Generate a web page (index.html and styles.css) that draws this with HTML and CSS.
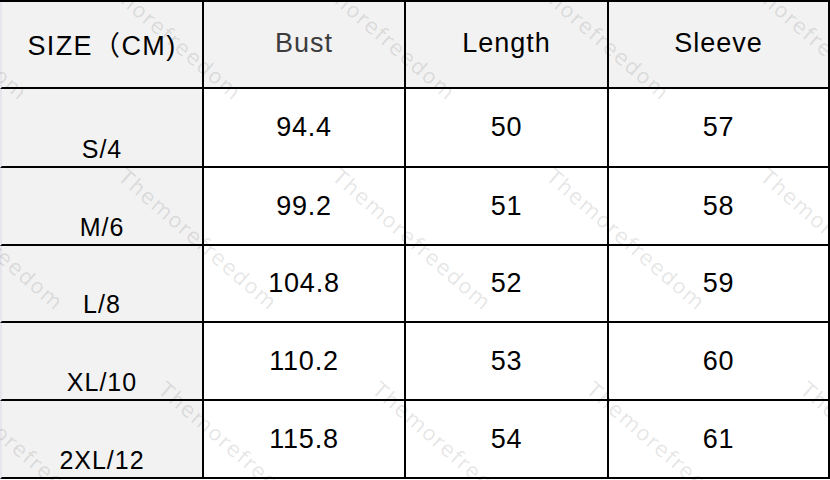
FILE: index.html
```html
<!DOCTYPE html>
<html>
<head>
<meta charset="utf-8">
<link rel="stylesheet" href="styles.css">
</head>
<body>
<div class="sheet">
  <div class="chart">
    <div class="cell head first">SIZE（CM)</div>
    <div class="cell head bust">Bust</div>
    <div class="cell head">Length</div>
    <div class="cell head last">Sleeve</div>

    <div class="cell size">S/4</div>
    <div class="cell">94.4</div>
    <div class="cell">50</div>
    <div class="cell last">57</div>

    <div class="cell size">M/6</div>
    <div class="cell">99.2</div>
    <div class="cell">51</div>
    <div class="cell last">58</div>

    <div class="cell size">L/8</div>
    <div class="cell">104.8</div>
    <div class="cell">52</div>
    <div class="cell last">59</div>

    <div class="cell size">XL/10</div>
    <div class="cell">110.2</div>
    <div class="cell">53</div>
    <div class="cell last">60</div>

    <div class="cell size">2XL/12</div>
    <div class="cell">115.8</div>
    <div class="cell">54</div>
    <div class="cell last">61</div>
  </div>

  <div class="marks">
    <div class="mark-row row-a">
      <span>Themorefreedom</span><span>Themorefreedom</span><span>Themorefreedom</span><span>Themorefreedom</span><span>Themorefreedom</span>
    </div>
    <div class="mark-row row-b">
      <span>Themorefreedom</span><span>Themorefreedom</span><span>Themorefreedom</span><span>Themorefreedom</span><span>Themorefreedom</span>
    </div>
    <div class="mark-row row-c">
      <span>Themorefreedom</span><span>Themorefreedom</span><span>Themorefreedom</span><span>Themorefreedom</span><span>Themorefreedom</span>
    </div>
  </div>
</div>
</body>
</html>
```

FILE: styles.css
```css
html, body {
  margin: 0;
  padding: 0;
  background: #ffffff;
}

.sheet {
  position: relative;
  width: 830px;
  height: 480px;
  overflow: hidden;
  background: #ffffff;
  font-family: "Liberation Sans", Arial, "Noto Sans CJK SC", sans-serif;
}

.chart {
  display: grid;
  grid-template-columns: 204px 202px 203px 221px;
  grid-template-rows: 87px 79px 78px 77px 78px 78px;
  border-top: 2px solid #000;
}

.cell {
  box-sizing: border-box;
  border-right: 2px solid #000;
  border-bottom: 2px solid #000;
  display: flex;
  align-items: center;
  justify-content: center;
  font-size: 27px;
  letter-spacing: 0.8px;
  color: #000;
  background: #ffffff;
}

.head {
  background: #f2f2f2;
  letter-spacing: 1px;
  padding-bottom: 2px;
}

.head.first {
  border-left: 2px solid #e6e6ec;
  letter-spacing: 1.4px;
}

.bust {
  color: #3c3c3c;
}

.size {
  background: #f2f2f2;
  border-left: 2px solid #e6e6ec;
  align-items: flex-end;
  font-size: 25px;
  letter-spacing: 1px;
  padding-bottom: 2px;
}

.marks {
  position: absolute;
  inset: 0;
  pointer-events: none;
}

.mark-row {
  position: absolute;
  display: flex;
}

.mark-row span {
  flex: 0 0 214px;
  white-space: nowrap;
  font-family: "DejaVu Sans", sans-serif;
  font-size: 21px;
  line-height: 1;
  letter-spacing: 1.5px;
  color: rgba(0, 0, 0, 0.11);
  transform: rotate(41deg);
  transform-origin: 0 0;
}

.row-a {
  left: -122px;
  top: -44px;
}

.row-b {
  left: -86px;
  top: 166px;
}

.row-c {
  left: -46px;
  top: 379px;
}
```
